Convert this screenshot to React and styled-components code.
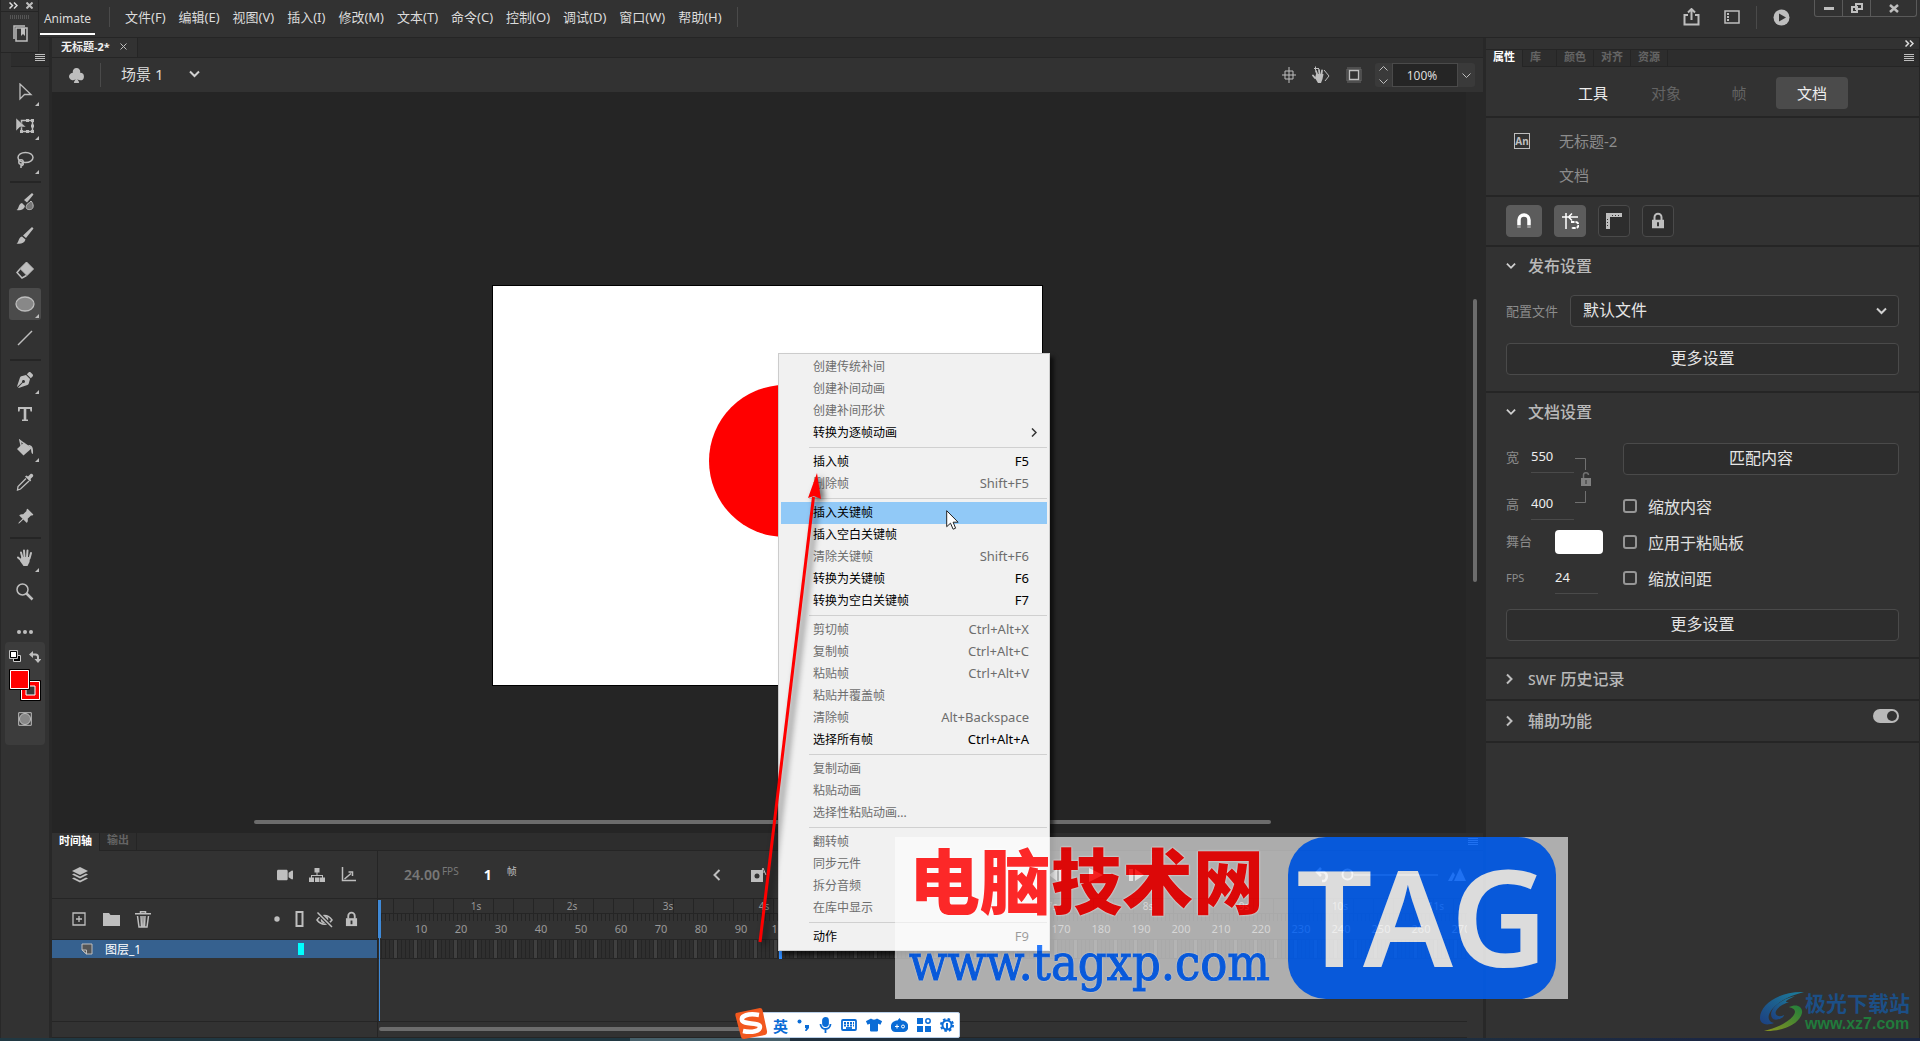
import React from "react";
import styled, { createGlobalStyle, css } from "styled-components";
import { BsPinAngleFill, BsSuitClubFill } from "react-icons/bs";
import { FaPenNib, FaVideo, FaTshirt } from "react-icons/fa";

const c = {
  panel: "#323232",
  strip: "#2d2d2d",
  line: "#252525",
  edge: "#282828",
  field: "#2d2d2d",
  border: "#4a4a4a",
  icon: "#bebebe",
  text: "#dcdcdc",
  dim: "#8c8c8c",
  off: "#646464",
};

const Global = createGlobalStyle`
  * { box-sizing: border-box; }
  body { margin: 0; background: ${c.panel}; overflow: hidden; }
  body, button, input, select {
    font-family: "Noto Sans", "Noto Sans CJK SC", sans-serif;
    color: ${c.text};
  }
  button { border: 0; padding: 0; background: none; font-size: inherit; }
  svg { display: block; flex: none; }
`;

/* ---------- shell ---------- */
const Shell = styled.div`
  position: relative;
  display: flex;
  flex-direction: column;
  height: 100vh;
  overflow: hidden;
  background: ${c.panel};
`;
const Body = styled.div`
  flex: 1;
  min-height: 0;
  display: flex;
`;
const TaskEdge = styled.div`
  flex: none;
  height: 3px;
  background: linear-gradient(90deg, #203842 0 630px, #46606a 630px 790px, #1f303e 790px 1400px, #1b2743 1700px);
`;
const VRule = styled.span`
  width: 1px;
  height: ${(p) => p.$h}px;
  background: ${c.border};
`;

/* ---------- header ---------- */
const Header = styled.header`
  flex: none;
  display: flex;
  align-items: flex-start;
  height: 38px;
  padding-left: 40px;
  border-bottom: 1px solid ${c.line};
`;
const Workspace = styled.button`
  height: 35px;
  width: 55px;
  padding-top: 3px;
  font-size: 12px;
  border-bottom: 2px solid #fff;
`;
const MenuBar = styled.nav`
  display: flex;
  align-items: center;
  gap: 13px;
  height: 33px;
  margin-left: 12px;
  font-size: 13px;
  button { white-space: nowrap; }
  ${VRule} { margin: 0 2px; }
`;
const HeaderTools = styled.div`
  margin-left: auto;
  display: flex;
  align-items: center;
  height: 34px;
  gap: 16px;
  svg:first-child { margin-right: 8px; }
`;
const WindowButtons = styled.div`
  display: flex;
  height: 17px;
  margin: 0 3px 0 24px;
  border: 1px solid #5a5a5a;
  border-top: 0;
  border-radius: 0 0 3px 3px;
`;
const WindowButton = styled.button`
  width: ${(p) => p.$w}px;
  display: grid;
  place-items: center;
  & + & { border-left: 1px solid #5a5a5a; }
`;

/* ---------- floating panel ---------- */
const Floater = styled.aside`
  position: absolute;
  left: 0;
  top: 0;
  width: 39px;
  height: 53px;
  background: #333;
  border: 1px solid ${c.line};
  border-top: 0;
  display: flex;
  flex-direction: column;
  align-items: center;
`;
const FloaterBar = styled.div`
  width: 100%;
  height: 12px;
  padding: 0 5px 0 8px;
  display: flex;
  align-items: center;
  justify-content: space-between;
  border-bottom: 1px solid ${c.line};
`;
const Grip = styled.div`
  width: 20px;
  height: 4px;
  margin: 3px 0 6px;
  background: repeating-linear-gradient(90deg, #555 0 1px, transparent 1px 2px);
`;

/* ---------- tools ---------- */
const Tools = styled.aside`
  flex: none;
  width: 52px;
  border-left: 1px solid ${c.edge};
  border-right: 3px solid ${c.edge};
  display: flex;
  flex-direction: column;
  align-items: center;
`;
const ToolsHead = styled.div`
  align-self: stretch;
  flex: none;
  display: flex;
  justify-content: flex-end;
  align-items: flex-end;
  height: 29px;
  margin: 0 0 9px 10px;
  padding: 0 4px 4px 0;
  background: ${c.strip};
  border-bottom: 1px solid ${c.line};
`;
const Tool = styled.button`
  position: relative;
  flex: none;
  width: 32px;
  height: 32px;
  margin-bottom: 2px;
  display: grid;
  place-items: center;
  border-radius: 3px;
  color: ${c.icon};
  background: ${(p) => (p.$on ? "#4b4b4b" : "none")};
  ${(p) =>
    p.$more &&
    css`
      &::after {
        content: "";
        position: absolute;
        right: 2px;
        bottom: 2px;
        border: 2px solid transparent;
        border-right-color: ${c.icon};
        border-bottom-color: ${c.icon};
      }
    `}
`;
const MoreTools = styled(Tool)`
  padding-top: 12px;
  margin-bottom: 0;
`;
const ToolRule = styled.hr`
  flex: none;
  width: 31px;
  height: 2px;
  margin: 3px 0;
  border: 0;
  background: ${c.line};
`;
const ColorBox = styled.div`
  flex: none;
  width: 40px;
  height: 103px;
  border-radius: 4px;
  background: #3c3c3c;
  display: flex;
  flex-direction: column;
  align-items: center;
  gap: 5px;
  padding-top: 8px;
`;

/* ---------- document area ---------- */
const Center = styled.main`
  flex: 1;
  min-width: 0;
  display: flex;
  flex-direction: column;
`;
const DocTabs = styled.div`
  flex: none;
  height: 20px;
  display: flex;
  background: ${c.strip};
  border-bottom: 1px solid ${c.line};
`;
const DocTab = styled.div`
  display: flex;
  align-items: center;
  gap: 10px;
  padding: 0 10px 3px 9px;
  background: ${c.panel};
  border-right: 1px solid ${c.line};
  font-size: 11px;
  font-weight: 700;
  color: #eee;
`;
const EditBar = styled.div`
  flex: none;
  height: 34px;
  display: flex;
  align-items: center;
  padding: 0 8px 0 16px;
`;
const Scene = styled.button`
  display: flex;
  align-items: center;
  gap: 26px;
  margin-left: 20px;
  font-size: 15px;
  line-height: 20px;
  padding-bottom: 2px;
`;
const EditTools = styled.div`
  margin-left: auto;
  display: flex;
  align-items: center;
  gap: 16px;
`;
const Zoom = styled.div`
  display: flex;
  width: 100px;
  height: 24px;
  margin-left: -3px;
  background: #3a3a3a;
  border-radius: 3px;
  input {
    width: 66px;
    font-size: 12px;
    text-align: center;
    padding: 0 6px 0 0;
    background: ${c.line};
    border: 1px solid ${c.border};
  }
`;
const ZoomSide = styled.button`
  width: 17px;
  display: flex;
  flex-direction: column;
  align-items: center;
  justify-content: center;
  gap: 8px;
`;
const Pasteboard = styled.section`
  position: relative;
  flex: 1;
  min-height: 0;
  display: flex;
  justify-content: center;
  align-items: flex-start;
  padding-top: 193px;
  background: linear-gradient(90deg, transparent calc(100% - 17px), ${c.edge} 0) ${c.line};
`;
const Stage = styled.div`
  width: 551px;
  height: 401px;
  background: #fff;
  border: 1px solid #000;
`;
const ScrollX = styled.div`
  position: absolute;
  left: 202px;
  right: 212px;
  bottom: 9px;
  height: 4px;
  border-radius: 2px;
  background: #6c6c6c;
`;
const ScrollY = styled.div`
  position: absolute;
  top: 207px;
  right: 6px;
  width: 4px;
  height: 283px;
  border-radius: 2px;
  background: #6c6c6c;
`;

/* ---------- timeline ---------- */
const Timeline = styled.section`
  flex: none;
  height: 205px;
  display: flex;
  flex-direction: column;
`;
const Tabs = styled.div`
  flex: none;
  display: flex;
  height: ${(p) => p.$h}px;
  background: ${c.strip};
  border-bottom: 1px solid ${c.line};
`;
const Tab = styled.button`
  min-width: 34px;
  padding: 0 7px 4px;
  text-align: left;
  font-size: 11px;
  font-weight: 700;
  line-height: 13px;
  color: ${(p) => (p.$on ? "#fff" : c.off)};
  border-right: 1px solid ${c.line};
  ${(p) => p.$on && css`background: ${c.panel}; margin-bottom: -1px;`}
`;
const Burger = styled.button`
  align-self: center;
  margin: 0 5px 0 auto;
`;
const TimelineBody = styled.div`
  flex: 1;
  display: flex;
  padding-right: 16px;
`;
const LayerSide = styled.div`
  flex: none;
  width: 326px;
  border-right: 1px solid ${c.line};
  display: flex;
  flex-direction: column;
`;
const Bar = styled.div`
  flex: none;
  height: ${(p) => p.$h}px;
  display: flex;
  align-items: center;
  padding: 0 19px 0 20px;
  border-bottom: 1px solid ${c.line};
`;
const Right = styled.div`
  margin-left: auto;
  display: flex;
  align-items: center;
  gap: ${(p) => p.$gap}px;
`;
const LayerRow = styled.div`
  flex: none;
  height: 18px;
  display: flex;
  align-items: center;
  padding: 0 73px 0 29px;
  gap: 12px;
  background: #36618f;
  color: #fff;
  font-size: 12px;
`;
const Swatch = styled.span`
  width: 6px;
  height: 12px;
  margin-left: auto;
  background: #0ff;
`;
const Foot = styled.div`
  margin-top: auto;
  height: 17px;
  border-top: 1px solid ${c.line};
  border-bottom: 1px solid ${c.line};
  padding: 5px 0 0 1px;
`;
const FootThumb = styled.div`
  width: 540px;
  height: 4px;
  border-radius: 2px;
  background: #6c6c6c;
`;
const FrameSide = styled.div`
  position: relative;
  flex: 1;
  min-width: 0;
  overflow: hidden;
  display: flex;
  flex-direction: column;
`;
const Fps = styled.span`
  display: flex;
  align-items: flex-start;
  font-size: 14px;
  font-weight: 600;
  line-height: 16px;
  color: #787878;
  sup { font-size: 10px; font-weight: 400; line-height: 8px; margin-left: 2px; }
`;
const FrameNo = styled.span`
  display: flex;
  gap: 15px;
  margin-left: 25px;
  font-size: 14px;
  font-weight: 700;
  line-height: 16px;
  color: #fff;
  sup { font-size: 10px; line-height: 8px; font-weight: 400; color: ${c.icon}; }
`;
const PlayBar = styled(Bar)`
  padding: 0 1px 0 26px;
`;
const Spacer = styled.span`
  flex: none;
  width: ${(p) => p.$w}px;
`;
const Speed = styled.span`
  display: flex;
  align-items: center;
`;
const SpeedLine = styled.span`
  width: 84px;
  height: 2px;
  background: #777;
`;
const Seconds = styled.div`
  flex: none;
  display: flex;
  height: 15px;
  padding-left: 50px;
  border-bottom: 1px solid ${c.line};
  background: linear-gradient(90deg, ${c.line} 1px, transparent 1px) 15px 0 / 20px 100%;
  span { flex: none; width: 96px; text-align: center; font-size: 10px; line-height: 14px; color: #999; }
`;
const Frames = styled.div`
  flex: none;
  display: flex;
  height: 26px;
  padding: 9px 0 0 23px;
  border-bottom: 1px solid ${c.line};
  background: linear-gradient(90deg, ${c.line} 1px, transparent 1px) 3px 0 / 4px 7px repeat-x;
  span { flex: none; width: 40px; text-align: center; font-size: 11px; line-height: 12px; color: #999; }
`;
const Cells = styled.div`
  flex: none;
  height: 19px;
  border-bottom: 1px solid ${c.line};
  background:
    linear-gradient(90deg, ${c.line} 1px, transparent 1px) 3px 0 / 4px 100%,
    linear-gradient(90deg, #404040 3px, transparent 3px) 16px 0 / 20px 100%,
    #2f2f2f;
`;
const Playhead = styled.div`
  position: absolute;
  left: 0;
  top: 49px;
  width: 3px;
  height: 38px;
  background: #3f8ad8;
  &::after {
    content: "";
    position: absolute;
    left: 1px;
    top: 38px;
    width: 1px;
    height: 83px;
    background: #3f8ad8;
  }
`;
const LastFrame = styled.div`
  position: absolute;
  left: 401px;
  top: 90px;
  width: 3px;
  height: 18px;
  background: #2f8cff;
`;

/* ---------- properties ---------- */
const Props = styled.aside`
  flex: none;
  width: 437px;
  border-left: 3px solid ${c.edge};
  border-right: 1px solid ${c.line};
`;
const PropsTop = styled.div`
  height: 12px;
  display: flex;
  justify-content: flex-end;
  align-items: center;
  padding-right: 5px;
  border-bottom: 1px solid ${c.line};
`;
const Section = styled.section`
  padding: ${(p) => p.$pad || "11px 20px 16px"};
  border-bottom: 2px solid ${c.line};
`;
const Modes = styled.div`
  display: flex;
  justify-content: center;
  gap: 1px;
`;
const Mode = styled.button`
  width: 72px;
  height: 32px;
  padding-bottom: 2px;
  border-radius: 4px;
  font-size: 15px;
  color: ${(p) => (p.$dim ? c.off : "#eee")};
  background: ${(p) => (p.$on ? "#4b4b4b" : "none")};
`;
const DocInfo = styled.div`
  display: flex;
  gap: 29px;
  font-size: 15px;
  line-height: 16px;
  color: ${c.dim};
  p { margin: 0; }
  p + p { margin-top: 18px; }
`;
const AnBadge = styled.span`
  width: 16px;
  height: 16px;
  border: 1px solid ${c.icon};
  font-size: 10px;
  font-weight: 700;
  line-height: 14px;
  text-align: center;
  color: ${c.icon};
`;
const Snaps = styled.div`
  display: flex;
  gap: 12px;
`;
const Snap = styled.button`
  width: ${(p) => (p.$wide ? 36 : 32)}px;
  height: 32px;
  display: grid;
  place-items: center;
  border-radius: 4px;
  border: 1px solid ${(p) => (p.$on ? "#5c5c5c" : c.border)};
  background: ${(p) => (p.$on ? "#5c5c5c" : c.field)};
`;
const Title = styled.button`
  display: flex;
  align-items: center;
  gap: 12px;
  height: 16px;
  font-size: 16px;
  font-weight: 500;
  line-height: 16px;
  color: #b9b9b9;
  svg { width: 10px; }
  small { font-size: 14px; }
`;
const TitleRow = styled.div`
  display: flex;
  align-items: flex-start;
  justify-content: space-between;
  height: 20px;
  ${Title} { align-self: flex-end; }
`;
const Row = styled.div`
  display: flex;
  align-items: center;
  margin: 21px 0 16px;
`;
const Label = styled.label`
  width: ${(p) => p.$w}px;
  font-size: 13px;
  color: ${c.dim};
  padding-bottom: 2px;
  ${(p) => p.$small && css`font-size: 11px;`}
`;
const SelectBox = styled.div`
  position: relative;
  flex: 1;
  select {
    appearance: none;
    width: 100%;
    height: 32px;
    padding: 0 12px 2px;
    font-size: 16px;
    color: #e6e6e6;
    background: ${c.field};
    border: 1px solid ${c.border};
    border-radius: 4px;
  }
  svg { position: absolute; right: 12px; top: 12px; pointer-events: none; }
`;
const Wide = styled.button`
  display: block;
  width: 100%;
  height: 32px;
  padding-bottom: 2px;
  font-size: 16px;
  line-height: 28px;
  color: #e6e6e6;
  background: ${c.field};
  border: 1px solid ${c.border};
  border-radius: 4px;
`;
const DocGrid = styled.div`
  display: flex;
  margin: 23px 0 13px;
`;
const DocLeft = styled.div`
  width: 117px;
  display: flex;
  flex-direction: column;
  gap: 8px;
`;
const SizeBlock = styled.div`
  display: flex;
  gap: 1px;
`;
const SizeRows = styled.div`
  display: flex;
  flex-direction: column;
  gap: 18px;
`;
const Field = styled.div`
  display: flex;
  align-items: center;
  height: 29px;
  input {
    width: 43px;
    height: 30px;
    padding: 0 0 3px;
    font-size: 13px;
    color: #eee;
    background: none;
    border: 0;
    border-bottom: 1px solid ${c.border};
  }
`;
const StageColor = styled.button`
  width: 48px;
  height: 24px;
  border-radius: 4px;
  background: #fff;
`;
const DocRight = styled.div`
  flex: 1;
`;
const Checks = styled.div`
  padding-top: 13px;
`;
const Check = styled.label`
  display: flex;
  align-items: center;
  gap: 11px;
  height: 36px;
  font-size: 16px;
  color: #e0e0e0;
  input {
    appearance: none;
    width: 14px;
    height: 14px;
    margin: 0;
    border: 2px solid #969696;
    border-radius: 3px;
  }
`;
const Toggle = styled.input`
  appearance: none;
  width: 26px;
  height: 14px;
  margin: 0;
  padding: 2px;
  border-radius: 7px;
  background: #b9b9b9;
  display: flex;
  justify-content: flex-end;
  &::before {
    content: "";
    width: 10px;
    height: 10px;
    border-radius: 50%;
    background: ${c.panel};
  }
`;

/* ---------- context menu ---------- */
const Menu = styled.div`
  position: absolute;
  left: 778px;
  top: 353px;
  width: 272px;
  padding: 2px;
  border: 1px solid #ccc;
  background: #f1f1f1;
  box-shadow: 4px 4px 4px rgba(0, 0, 0, 0.6);
`;
const MenuItem = styled.button`
  display: flex;
  align-items: center;
  justify-content: space-between;
  width: 100%;
  height: 22px;
  padding: 0 ${(p) => (p.$sub ? 10 : 18)}px 2px 32px;
  font-size: 12px;
  color: ${(p) => (p.$off ? "#6d6d6d" : "#000")};
  background: ${(p) => (p.$hot ? "#91c9f7" : "none")};
`;
const Keys = styled.span`
  font-size: 13px;
`;
const MenuRule = styled.hr`
  height: 1px;
  margin: 3px 0 3px 28px;
  border: 0;
  background: #d0d0d0;
`;
const Over = styled.svg`
  position: absolute;
  left: ${(p) => p.$x}px;
  top: ${(p) => p.$y}px;
  pointer-events: none;
`;

/* ---------- banner ---------- */
const Banner = styled.div`
  position: absolute;
  left: 895px;
  top: 837px;
  width: 673px;
  height: 162px;
  display: flex;
  justify-content: space-between;
  padding: 0 12px 0 14px;
  background: rgba(255, 255, 255, 0.73);
  opacity: 0.83;
`;
const BannerText = styled.div`
  width: 368px;
  white-space: nowrap;
  text-shadow: 0 0 2px #fff, 0 0 2px #fff;
`;
const BannerName = styled.div`
  padding-top: 3px;
  font-family: "Noto Sans CJK SC", sans-serif;
  font-size: 71px;
  font-weight: 900;
  line-height: 74px;
  color: #f00;
`;
const BannerUrl = styled.div`
  font-family: "DejaVu Serif Condensed", "DejaVu Serif", serif;
  font-size: 50px;
  line-height: 98px;
  color: #0062fd;
  -webkit-text-stroke: 1px #0062fd;
`;
const BannerTag = styled.div`
  width: 268px;
  border-radius: 38px;
  background: #0062fd;
  color: #fff;
  font-family: "Noto Sans", sans-serif;
  font-size: 134px;
  font-weight: 600;
  line-height: 156px;
  text-align: center;
`;

/* ---------- input method bar and site mark ---------- */
const Ime = styled.div`
  position: absolute;
  left: 745px;
  top: 1012px;
  width: 215px;
  height: 26px;
  display: flex;
  align-items: center;
  justify-content: space-between;
  padding: 0 5px 0 27px;
  background: #fff;
  border: 1px solid #b9cfe8;
  border-radius: 2px;
  font-size: 15px;
  font-weight: 700;
  color: #0a6cd6;
`;
const Site = styled.div`
  position: absolute;
  right: 10px;
  bottom: 8px;
  display: flex;
  align-items: center;
`;
const SiteText = styled.div`
  color: #1c4f86;
  font-size: 21px;
  font-weight: 700;
  line-height: 24px;
  div { font-family: "Liberation Sans", sans-serif; font-size: 16px; line-height: 18px; color: #217a3c; }
`;

/* ---------- icons ---------- */
const Ico = ({ w = 18, h = w, children, ...rest }) => (
  <svg width={w} height={h} viewBox={`0 0 ${w} ${h}`} fill="none" stroke={c.icon} {...rest}>
    {children}
  </svg>
);
const F = { fill: c.icon, stroke: "none" };
const Lines = () => (
  <Ico w={10} h={8}>
    <path d="M0 .5h10M0 2.500h10M0 4.500h10M0 6.500h10" />
  </Ico>
);
const Down = ({ w = 11, sw = 2 }) => (
  <svg width={w} height={8} viewBox="0 0 11 8" fill="none" stroke="#d0d0d0" strokeWidth={sw}>
    <path d="M1 1.500l4.500 4.500L10 1.500" />
  </svg>
);
const Side = () => (
  <Ico w={10} h={12} strokeWidth="2">
    <path d="M1 1.500l4.500 4.500L1 10.500" />
  </Ico>
);
const Twice = () => (
  <Ico w={9} h={7} stroke="#ddd" strokeWidth="1.500">
    <path d="M.5.5l3 3-3 3M5 .5l3 3-3 3" />
  </Ico>
);
const Lock = ({ w = 14, open, color = c.icon }) => (
  <svg width={w} height={w * 1.25} viewBox="0 0 14 17" fill="none">
    <path d={open ? "M4 8V4.500a3.500 3.500 0 0 1 7-.5" : "M3.500 8V5a3.500 3.500 0 0 1 7 0v3"} stroke={color} strokeWidth="2" />
    <path d="M1 7.500h12V16H1z" fill={color} />
    <path d="M6 10h2v4H6z" fill="#333" />
  </svg>
);

const tools = [
  { name: "选择工具", more: 1, art: <Ico><path d="M4 1v15l4.500-4.500H15z" strokeWidth="1.300" /></Ico> },
  {
    name: "任意变形工具", more: 1,
    art: (
      <Ico w={20} h={18}>
        <path d="M6.500 3.500h11v11h-11z" strokeWidth="1.500" />
        <path d="M11 2h3v3h-3zM16 2h3v3h-3zM16 7.500h3v3h-3zM16 13h3v3h-3zM11 13h3v3h-3zM5 13h3v3H5z" {...F} />
        <path d="M1 1v13l4-4h6z" fill={c.icon} stroke={c.panel} strokeWidth=".5" />
      </Ico>
    ),
  },
  {
    name: "套索工具", more: 1,
    art: (
      <Ico strokeWidth="1.500">
        <ellipse cx="9.500" cy="6.500" rx="7.500" ry="5" />
        <circle cx="5" cy="11" r="2.200" />
        <path d="M7 12c1 2-1 3-2.500 2.500M5 14v3" />
      </Ico>
    ),
  },
  null,
  {
    name: "流畅画笔工具",
    art: (
      <Ico>
        <path d="M16 0l1.500 1.500-6.500 8L8 7zM.5 17c2.500-.5 1.500-6 5.500-7l3 3C8 17 4 18 .5 17z" {...F} />
        <path d="M15 8c3 3 3 8-.5 8.500-3.500.5-5-1-4-4 .5-2 2.500-2 4.500-4.500z" fill="#777" />
      </Ico>
    ),
  },
  { name: "画笔工具", art: <Ico><path d="M16 0l1.500 1.500L10 11 7 8.500zM.5 16.500c2.500-.5 1.500-6 5.500-7l3.500 3c-1 4-5.500 5-9 4z" {...F} /></Ico> },
  {
    name: "橡皮擦工具",
    art: (
      <Ico>
        <path d="M10.500 1l7 7-6.500 6.500-7-7z" fill={c.icon} />
        <path d="M4 8l-3 3.500L6 17l4.500-2.500" strokeWidth="1.500" />
      </Ico>
    ),
  },
  { name: "椭圆工具", more: 1, on: 1, art: <Ico w={20} h={18}><ellipse cx="10" cy="9" rx="9" ry="7" fill="#888" strokeWidth="1.300" /></Ico> },
  { name: "线条工具", art: <Ico><path d="M2 16L16 2" strokeWidth="1.500" /></Ico> },
  null,
  { name: "钢笔工具", more: 1, art: <FaPenNib size={16} /> },
  { name: "文本工具", art: <Ico w={16} {...F}><path d="M1 1h14v4.500h-1.500L13 3H9.300v10.500H11V15H5v-1.500h1.700V3H3l-.5 2.500H1z" /></Ico> },
  {
    name: "颜料桶工具", more: 1,
    art: (
      <Ico>
        <path d="M8 3.500l8 5.500-8.500 7.500L1 10z" {...F} />
        <path d="M5.500 8L4 1.500l4 3" strokeWidth="1.500" />
        <path d="M12 6c4 0 5.500 2 5 9-1.500 0-2-3-2-6z" {...F} />
      </Ico>
    ),
  },
  {
    name: "滴管工具",
    art: (
      <Ico>
        <path d="M10 5.500L2 13.500 1.500 17l3-1L13 8" strokeWidth="1.300" />
        <path d="M9 3.500l1.500-1 1.500 1L14.500 1c1.500-1 3.500 1 2.500 2.500L14.500 6l.7 1.500-1.200 1z" {...F} />
      </Ico>
    ),
  },
  { name: "资源变形工具", art: <BsPinAngleFill size={17} /> },
  null,
  {
    name: "手形工具", more: 1,
    art: (
      <Ico strokeLinecap="round" strokeWidth="2">
        <path d="M6.500 9L5 3.500M8.500 8L8 1.500M11 8l.5-6.500M13.500 9.500L15 4M6 12L2 8.500" />
        <path d="M5.500 8h8.500l-.5 5-2 4H7.500L4 12z" {...F} />
      </Ico>
    ),
  },
  { name: "缩放工具", art: <Ico><circle cx="6.500" cy="6.500" r="5.500" strokeWidth="1.500" /><path d="M10.500 10.500L16.500 16.500" strokeWidth="2.500" /></Ico> },
];

const menus = ["文件(F)", "编辑(E)", "视图(V)", "插入(I)", "修改(M)", "文本(T)", "命令(C)", "控制(O)", "调试(D)", "窗口(W)", "帮助(H)"];

/* [label, shortcut, enabled, highlighted, submenu]; null draws a separator */
const items = [
  ["创建传统补间"], ["创建补间动画"], ["创建补间形状"], ["转换为逐帧动画", "", 1, 0, 1], null,
  ["插入帧", "F5", 1], ["删除帧", "Shift+F5"], null,
  ["插入关键帧", "", 1, 1], ["插入空白关键帧", "", 1], ["清除关键帧", "Shift+F6"], ["转换为关键帧", "F6", 1], ["转换为空白关键帧", "F7", 1], null,
  ["剪切帧", "Ctrl+Alt+X"], ["复制帧", "Ctrl+Alt+C"], ["粘贴帧", "Ctrl+Alt+V"], ["粘贴并覆盖帧"], ["清除帧", "Alt+Backspace"], ["选择所有帧", "Ctrl+Alt+A", 1], null,
  ["复制动画"], ["粘贴动画"], ["选择性粘贴动画..."], null,
  ["翻转帧"], ["同步元件"], ["拆分音频"], ["在库中显示"], null,
  ["动作", "F9", 1],
];

function ToolBar() {
  return (
    <Tools>
      <ToolsHead><Lines /></ToolsHead>
      {tools.map((t, i) =>
        t ? (
          <Tool key={i} aria-label={t.name} $on={t.on} $more={t.more}>{t.art}</Tool>
        ) : (
          <ToolRule key={i} />
        )
      )}
      <MoreTools aria-label="编辑工具栏">
        <Ico h={4} {...F}><circle cx="3" cy="2" r="2" /><circle cx="9" cy="2" r="2" /><circle cx="15" cy="2" r="2" /></Ico>
      </MoreTools>
      <ColorBox>
        <Ico w={32} h={13}>
          <path d="M4.500 5.500h7v6h-7z" fill="#000" stroke="#ccc" />
          <path d="M1.500 1.500h6v6h-6z" fill="#fff" stroke="#000" />
          <path d="M.5.5h8v8h-8z" />
          <path d="M23 4.500h3.500a2.500 2.500 0 0 1 2.500 2.500v3" strokeWidth="2" />
          <path d="M20 4.500l4-3.500v7zM25.500 9h7L29 13z" {...F} />
        </Ico>
        <Ico w={34} h={34}>
          <path d="M12.500 12.500h20v20h-20z" fill="#f00" stroke="#000" />
          <path d="M13.500 13.500h18v18h-18z" stroke="#fff" />
          <path d="M18 18h9v9h-9z" fill="#3c3c3c" stroke="#fff" />
          <path d="M1.500 1.500h20v20h-20z" fill="#f00" stroke="#000" />
          <path d="M2.500 2.500h18v18h-18z" stroke="#fff" />
        </Ico>
        <Spacer $w={1} />
        <Ico w={14}><path d="M.7.7h12.600v12.600H.7z" /><circle cx="7" cy="7" r="5.500" fill="#888" /></Ico>
      </ColorBox>
    </Tools>
  );
}

function TimelinePanel() {
  return (
    <Timeline>
      <Tabs $h={18}>
        <Tab $on>时间轴</Tab>
        <Tab>输出</Tab>
        <Burger aria-label="面板菜单"><Lines /></Burger>
      </Tabs>
      <TimelineBody>
        <LayerSide>
          <Bar $h={48}>
            <Ico w={16} {...F}>
              <path d="M8 0l8 4-8 4-8-4zM0 7.500l2-1 6 3 6-3 2 1-8 4zM0 11.500l2-1 6 3 6-3 2 1-8 4z" />
            </Ico>
            <Right $gap={16}>
              <FaVideo size={16} color={c.icon} />
              <Ico w={16} h={14} {...F}><path d="M5.500 0h5v4.500h-5zM0 9.500h5V14H0zM6 9.500h4.500V14H6zM11 9.500h5V14h-5zM7.500 4h1v3H14v3h-1V8H3v2H2V7h5.500z" /></Ico>
              <Ico w={17} h={15} strokeWidth="1.500"><path d="M1.500 0v13.500H15M3.500 12L10 6.500M7.500 5h4v4" /></Ico>
            </Right>
          </Bar>
          <Bar $h={41}>
            <Ico w={14}><path d="M1 1h12v12H1zM7 4v6M4 7h6" strokeWidth="1.300" /></Ico>
            <Spacer $w={17} />
            <Ico w={17} h={14} {...F}><path d="M0 1h6l1.500 2H17v11H0z" /></Ico>
            <Spacer $w={15} />
            <Ico w={16} h={17}><path d="M5.500 2V.8h5V2M0 2.700h16" strokeWidth="1.500" /><path d="M2.500 5L4 16h8l1.500-11M6 5l.5 11M8 5v11M10 5l-.5 11" strokeWidth="1.500" /></Ico>
            <Right $gap={12}>
              <Ico w={9} h={6} {...F}><circle cx="3" cy="3" r="2.700" /></Ico>
              <Ico w={9} h={16}><path d="M1.500 1h6v14h-6z" strokeWidth="2" /></Ico>
              <Ico w={17} strokeWidth="1.500"><path d="M1 9c4-6 11-6 15 0-4 5.500-11 5.500-15 0z" /><circle cx="8.500" cy="8.500" r="3" fill={c.icon} /><path d="M1 1l15 15" stroke={c.panel} strokeWidth="4" /><path d="M1.500 1.500L16 16" /></Ico>
              <Lock w={13} />
            </Right>
          </Bar>
          <LayerRow>
            <Ico w={12}><path d="M1 1h10v10H5.500L1 7z" fill="#555" /><path d="M1 7h4.500v4z" /></Ico>
            图层_1
            <Swatch />
          </LayerRow>
          <Foot />
        </LayerSide>
        <FrameSide>
          <PlayBar $h={48}>
            <Fps>24.00<sup>FPS</sup></Fps>
            <FrameNo>1<sup>帧</sup></FrameNo>
            <Spacer $w={196} />
            <Ico w={8} h={12} strokeWidth="2"><path d="M6.500 1L1.500 6l5 5" /></Ico>
            <Spacer $w={30} />
            <Ico w={18} h={16}><path d="M0 3h12v12H0z" {...F} /><circle cx="6" cy="9" r="2.500" fill="#333" stroke="none" /><path d="M9 8l3-7 3 7M10 5h4" /></Ico>
            <Right $gap={10}>
              <Ico w={95} h={14} {...F}><path d="M0 7l8-6v12zM10 1h3v12h-3zM40 0l14 7-14 7zM80 1h4v12h-4zM86 1l9 6-9 6z" /></Ico>
              <Spacer $w={150} />
              <Ico w={17} h={16} strokeWidth="2.500"><path d="M3 5h7a5 5 0 0 1 0 9H8M7 1L3 5l4 4" /></Ico>
              <Speed>
                <Ico w={13} strokeWidth="2"><circle cx="6.500" cy="6.500" r="5" /></Ico>
                <SpeedLine />
              </Speed>
              <Ico w={18} h={13} {...F}><path d="M6 13l6-13 6 13zM0 13l5-9 2 3-3 6z" /></Ico>
            </Right>
          </PlayBar>
          <Seconds>{Array.from({ length: 11 }, (_, i) => <span key={i}>{i + 1}s</span>)}</Seconds>
          <Frames>{Array.from({ length: 27 }, (_, i) => <span key={i}>{(i + 1) * 10}</span>)}</Frames>
          <Cells />
          <Foot><FootThumb /></Foot>
          <LastFrame />
          <Playhead />
        </FrameSide>
      </TimelineBody>
    </Timeline>
  );
}

function Properties() {
  return (
    <Props>
      <PropsTop><Twice /></PropsTop>
      <Tabs $h={17}>
        {["属性", "库", "颜色", "对齐", "资源"].map((t, i) => <Tab key={t} $on={i === 0}>{t}</Tab>)}
        <Burger aria-label="面板菜单"><Lines /></Burger>
      </Tabs>
      <Section $pad="10px 0 7px">
        <Modes>
          <Mode>工具</Mode><Mode $dim>对象</Mode><Mode $dim>帧</Mode><Mode $on>文档</Mode>
        </Modes>
      </Section>
      <Section $pad="15px 28px 12px">
        <DocInfo>
          <AnBadge>An</AnBadge>
          <div><p>无标题-2</p><p>文档</p></div>
        </DocInfo>
      </Section>
      <Section $pad="8px 20px">
        <Snaps>
          <Snap $on $wide aria-label="贴紧至对象">
            <Ico w={16} h={16} stroke="#fff" strokeWidth="3.500"><path d="M3 12V7a5 5 0 0 1 10 0v5" /><path d="M3 12v3M13 12v3" stroke="#999" /></Ico>
          </Snap>
          <Snap $on aria-label="贴紧对齐">
            <Ico w={18} h={18} stroke="#fff" strokeWidth="1.500"><path d="M5 1v16M1 5h16M11 1.500L7.500 5l3.500 3.500" /><path d="M10 10h4.500a3 3 0 0 1 0 6H10" strokeWidth="2" strokeDasharray="3.500 1" /></Ico>
          </Snap>
          <Snap aria-label="标尺">
            <Ico w={18} h={18} {...F}><path d="M1 1h16v4H5v12H1z" /><path d="M2.500 7v9M7 3.500h9" stroke="#333" strokeDasharray="1 2" /></Ico>
          </Snap>
          <Snap aria-label="锁定"><Lock w={14} /></Snap>
        </Snaps>
      </Section>
      <Section>
        <Title><Down w={10} />发布设置</Title>
        <Row>
          <Label htmlFor="profile" $w={64}>配置文件</Label>
          <SelectBox>
            <select id="profile"><option>默认文件</option></select>
            <Down />
          </SelectBox>
        </Row>
        <Wide>更多设置</Wide>
      </Section>
      <Section>
        <Title><Down w={10} />文档设置</Title>
        <DocGrid>
          <DocLeft>
            <SizeBlock>
              <SizeRows>
                <Field><Label htmlFor="w" $w={25}>宽</Label><input id="w" defaultValue="550" /></Field>
                <Field><Label htmlFor="h" $w={25}>高</Label><input id="h" defaultValue="400" /></Field>
              </SizeRows>
              <Ico w={18} h={76} stroke="#707070">
                <path d="M0 15.500h10.500V27M10.500 48v11.500H0" />
                <path d="M6 35h10v8H6z" fill="#808080" stroke="none" />
                <path d="M8.500 35v-2.500a2.500 2.500 0 0 1 5-.5" strokeWidth="1.500" />
                <path d="M11 37v4" stroke="#333" />
              </Ico>
            </SizeBlock>
            <Field><Label htmlFor="stage" $w={49}>舞台</Label><StageColor id="stage" /></Field>
            <Field><Label htmlFor="fps" $w={49} $small>FPS</Label><input id="fps" defaultValue="24" /></Field>
          </DocLeft>
          <DocRight>
            <Wide>匹配内容</Wide>
            <Checks>
              {["缩放内容", "应用于粘贴板", "缩放间距"].map((t) => <Check key={t}><input type="checkbox" />{t}</Check>)}
            </Checks>
          </DocRight>
        </DocGrid>
        <Wide>更多设置</Wide>
      </Section>
      <Section $pad="12px 20px">
        <Title><Side /><span><small>SWF</small> 历史记录</span></Title>
      </Section>
      <Section $pad="8px 20px 12px">
        <TitleRow>
          <Title as="label" htmlFor="a11y"><Side />辅助功能</Title>
          <Toggle id="a11y" type="checkbox" defaultChecked />
        </TitleRow>
      </Section>
    </Props>
  );
}

export default function App() {
  return (
    <Shell>
      <Global />
      <Header>
        <Workspace>Animate</Workspace>
        <MenuBar>
          <VRule $h={20} />
          {menus.map((m) => <button key={m}>{m}</button>)}
          <VRule $h={20} />
        </MenuBar>
        <HeaderTools>
          <Ico w={17} h={18} strokeWidth="2"><path d="M5 7H1.500v9.500h14V7H12M8.500 12V2M5 4.500l3.500-3.500L12 4.500" /></Ico>
          <Ico w={16} h={14} strokeWidth="1.500"><path d="M1 1h14v12H1z" /><path d="M4 3v8" strokeDasharray="2 1" strokeWidth="2" /></Ico>
          <VRule $h={23} />
          <Ico w={17}><circle cx="8.500" cy="8.500" r="8" {...F} /><path d="M6 4.500l7 4-7 4z" fill="#333" stroke="none" /></Ico>
        </HeaderTools>
        <WindowButtons>
          <WindowButton $w={27} aria-label="最小化"><Ico w={10} h={4} {...F}><path d="M0 1h10v3H0z" /></Ico></WindowButton>
          <WindowButton $w={28} aria-label="还原"><Ico w={12} h={10} strokeWidth="2"><path d="M5 1h6v5H5zM1 4h5v5H1z" /></Ico></WindowButton>
          <WindowButton $w={46} aria-label="关闭"><Ico w={10} h={9} strokeWidth="2.500"><path d="M1 1l8 7M9 1L1 8" /></Ico></WindowButton>
        </WindowButtons>
      </Header>
      <Body>
        <ToolBar />
        <Center>
          <DocTabs>
            <DocTab>无标题-2*<Ico w={7} h={7}><path d="M.5.5l6 6M6.500.5l-6 6" /></Ico></DocTab>
          </DocTabs>
          <EditBar>
            <BsSuitClubFill size={17} color={c.icon} />
            <Spacer $w={15} />
            <VRule $h={24} />
            <Scene>场景 1<Down /></Scene>
            <EditTools>
              <Ico w={14} h={16}><path d="M7 0v16M0 8h14M3 4h8v8H3z" /></Ico>
              <Ico w={18}>
                <path d="M5.500 9L4 5M7.500 8l-.5-4M9.500 8.500l.5-4M3 12L1 9.500" strokeWidth="1.800" strokeLinecap="round" />
                <path d="M4 8h7.500l-1 5-1.500 4H6L3 12z" {...F} />
                <path d="M12 4l5 6-4 5M2 2.500h5M3.500.5v4" />
              </Ico>
              <Ico w={16}><path d="M1.500 1.500h13v13h-13z" strokeWidth="3" stroke="#6a6a6a" strokeDasharray="1 1" /><path d="M3.500 3.500h9v9h-9z" strokeWidth="1.300" /></Ico>
              <Zoom>
                <ZoomSide aria-label="调整缩放">
                  <Ico w={9} h={5}><path d="M.5 4.500l4-4 4 4" /></Ico>
                  <Ico w={9} h={5}><path d="M.5.5l4 4 4-4" /></Ico>
                </ZoomSide>
                <input aria-label="缩放比例" defaultValue="100%" />
                <ZoomSide aria-label="缩放列表"><Ico w={9} h={5}><path d="M.5.5l4 4 4-4" /></Ico></ZoomSide>
              </Zoom>
            </EditTools>
          </EditBar>
          <Pasteboard>
            <Stage>
              <svg width="549" height="399"><circle cx="292" cy="175" r="76" fill="#f00" /></svg>
            </Stage>
            <ScrollX />
            <ScrollY />
          </Pasteboard>
          <TimelinePanel />
        </Center>
        <Properties />
      </Body>
      <TaskEdge />

      <Floater>
        <FloaterBar><Twice /><Ico w={7} h={7} strokeWidth="2"><path d="M.5.5l6 6M6.500.5l-6 6" /></Ico></FloaterBar>
        <Grip />
        <Ico w={16} h={17}><path d="M4 3h11v13H4z" strokeWidth="1.500" /><path d="M2 14V1h11" strokeWidth="1.500" /><path d="M9 3h4v8l-2-2-2 2z" {...F} /></Ico>
      </Floater>

      <Menu>
        {items.map((it, i) =>
          it ? (
            <MenuItem key={i} $off={!it[2]} $hot={it[3]} $sub={it[4]}>
              <span>{it[0]}</span>
              {it[4] ? <Ico w={6} h={9} stroke="#333" strokeWidth="1.500"><path d="M1 .5l4 4-4 4" /></Ico> : <Keys>{it[1]}</Keys>}
            </MenuItem>
          ) : (
            <MenuRule key={i} />
          )
        )}
      </Menu>

      <Over $x={745} $y={465} width="90" height="490" style={{ filter: "drop-shadow(4px 3px 3px rgba(0,0,0,.6))" }}>
        <path d="M15 477L68.500 32" stroke="#f00" strokeWidth="3" />
        <path d="M72 8L63 33l6-2 7 3z" fill="#f00" />
      </Over>
      <Over $x={946} $y={510} width="14" height="21">
        <path d="M.7.7v16l3.800-3.500 2.600 6 2.500-1-2.500-6h5z" fill="#fff" stroke="#222" />
      </Over>

      <Banner>
        <BannerText>
          <BannerName>电脑技术网</BannerName>
          <BannerUrl>www.tagxp.com</BannerUrl>
        </BannerText>
        <BannerTag>TAG</BannerTag>
      </Banner>

      <Ime>
        英
        <Ico w={13} h={12} fill="#0a6cd6" stroke="none"><circle cx="2.500" cy="2.500" r="2" /><path d="M8 6h4v3l-2.500 3H8l1-3H8z" /></Ico>
        <Ico w={13} h={16} stroke="#0a6cd6" strokeWidth="1.800"><rect x="4" y="1" width="5" height="8" rx="2.500" fill="#0a6cd6" /><path d="M1.500 7a5 5 0 0 0 10 0M6.500 12v4" /></Ico>
        <Ico w={16} h={12} stroke="#0a6cd6" strokeWidth="1.800"><rect x="1" y="1" width="14" height="10" rx="1" /><path d="M3 4h10M3 6.500h10" strokeDasharray="2 1" /><path d="M5 9h6" /></Ico>
        <FaTshirt size={16} />
        <Ico w={17} h={14} fill="#0a6cd6" stroke="none"><path d="M8.500 0l2 2.500c9 0 8.500 11.500 2 11.500h-8C-2 14-2 2.500 6.500 2.500z" /><path d="M4 8.500h4M6 6.500v4" stroke="#fff" /><circle cx="12" cy="8.500" r="1.500" stroke="#fff" /></Ico>
        <Ico w={14} fill="#0a6cd6" stroke="none"><path d="M0 0h6v6H0zM0 8h6v6H0zM8 8h6v6H8z" /><circle cx="11" cy="3" r="2.200" stroke="#0a6cd6" strokeWidth="1.500" fill="#fff" /></Ico>
        <Ico w={14} h={14} stroke="#0a6cd6"><circle cx="7" cy="7" r="4.500" strokeWidth="2" /><circle cx="7" cy="7" r="6" strokeWidth="2" strokeDasharray="2.500 2.200" /><path d="M7 5v7" strokeWidth="2" /></Ico>
      </Ime>
      <Over $x={734} $y={1007} width="36" height="34">
        <path d="M2 6L26 1q2 0 2.500 2L33 24q.5 3-2 4L10 32q-2.500 0-3-2L1.500 9Q1 7 2 6z" fill="#f2581e" />
        <path d="M25 8C14 6 7 9 8 13c1 5 18 2 18 7 0 4-8 6-17 4" fill="none" stroke="#fff" strokeWidth="4.500" />
      </Over>

      <Site>
        <svg width="46" height="42" viewBox="0 0 46 42" fill="none">
          <defs>
            <linearGradient id="sea" x1="0" y1="1" x2="1" y2="0"><stop stopColor="#1d3f80" /><stop offset="1" stopColor="#1c7f9c" /></linearGradient>
            <linearGradient id="leaf" x1="0" y1="1" x2="1" y2="0"><stop stopColor="#8a9320" /><stop offset="1" stopColor="#1f7f3c" /></linearGradient>
          </defs>
          <path d="M45 1C20 0 0 14 1 28c1 5 6 7 14 4C3 30 10 10 45 1z" fill="url(#sea)" />
          <path d="M36 5C16 10 8 22 14 28c4 2 11-1 11-4-5 3-10 0-8-4 3-6 11-8 13-9-4 0-6 0 6-6z" fill="url(#sea)" />
          <path d="M30 16c8-4 14 0 13 6-2 10-18 19-38 18 18-4 30-13 31-19 0-3-3-4-6-5z" fill="url(#leaf)" />
        </svg>
        <SiteText>极光下载站<div>www.xz7.com</div></SiteText>
      </Site>
    </Shell>
  );
}
